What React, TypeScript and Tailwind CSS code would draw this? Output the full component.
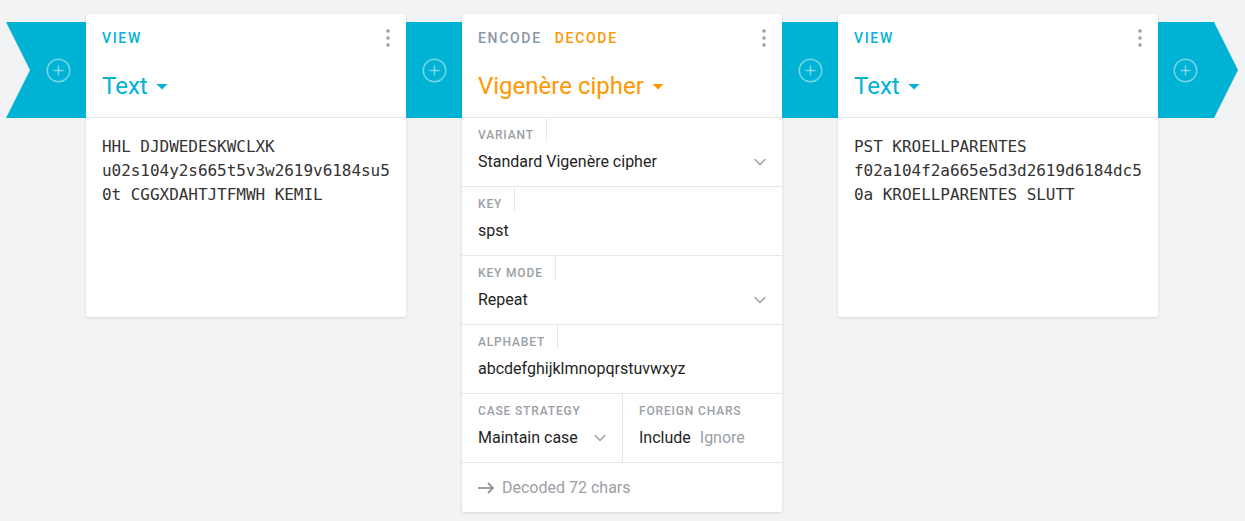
import React from "react";
import { CirclePlus, EllipsisVertical, ChevronDown } from "lucide-react";

function PlusIcon() {
  return <CirclePlus size={27} strokeWidth={1.3} className="text-white/45" />;
}

function Caret() {
  return (
    <svg width="24" height="24" viewBox="0 0 24 24" className="ml-[2px]">
      <path d="M6.5 10l5.5 5.5 5.5-5.5z" fill="currentColor" />
    </svg>
  );
}

function Dots() {
  return <EllipsisVertical size={24} strokeWidth={1.6} className="text-[#9e9e9e]" />;
}

function ViewCard({ lines }: { lines: string }) {
  return (
    <div className="w-[320px] shrink-0 rounded-[2px] bg-white shadow-[0_1px_3px_rgba(0,0,0,0.12)]">
      <div className="h-[104px] border-b border-[#e6e8eb] pt-[14px]">
        <div className="flex h-[20px] items-center justify-between pl-4 pr-[6px]">
          <span className="text-[14px] font-medium leading-[20px] tracking-[0.12em] text-[#00b2d3]">VIEW</span>
          <Dots />
        </div>
        <div className="mt-[22px] flex h-[32px] items-center pl-4 text-[#00b2d3]">
          <span className="text-[24px] leading-[32px]">Text</span>
          <Caret />
        </div>
      </div>
      <div className="h-[199px] px-4 pt-[17px]">
        <p className="break-words font-['DejaVu_Sans_Mono',monospace] text-[16px] leading-[24px] tracking-[-0.04px] text-[#333333]">
          {lines}
        </p>
      </div>
    </div>
  );
}

function Field({ label, value, chevron }: { label: string; value: string; chevron?: boolean }) {
  return (
    <div className="h-[69px] border-b border-[#e6e8eb]">
      <div className="flex">
        <div className="h-[24px] border-r border-[#e6e8eb] pl-4 pr-[12px] pt-[11px] text-[12px] font-medium leading-[13px] tracking-[0.07em] text-[#9aa0a6]">
          {label}
        </div>
      </div>
      <div className="mt-[8px] flex h-[24px] items-center justify-between pl-4 pr-[12px] text-[16px] leading-[24px] text-[#1f1f1f]">
        <span>{value}</span>
        {chevron && <ChevronDown size={20} strokeWidth={1.6} className="text-[#9e9e9e]" />}
      </div>
    </div>
  );
}

function CipherCard() {
  return (
    <div className="w-[320px] shrink-0 rounded-[2px] bg-white shadow-[0_1px_3px_rgba(0,0,0,0.12)]">
      <div className="h-[104px] border-b border-[#e6e8eb] pt-[14px]">
        <div className="flex h-[20px] items-center justify-between pl-4 pr-[6px]">
          <div className="flex gap-[13px] text-[14px] font-medium leading-[20px] tracking-[0.12em]">
            <span className="text-[#8a97a3]">ENCODE</span>
            <span className="text-[#ff9800]">DECODE</span>
          </div>
          <Dots />
        </div>
        <div className="mt-[22px] flex h-[32px] items-center pl-4 text-[#ff9800]">
          <span className="text-[24px] leading-[32px]">Vigenère cipher</span>
          <Caret />
        </div>
      </div>
      <Field label="VARIANT" value="Standard Vigenère cipher" chevron />
      <Field label="KEY" value="spst" />
      <Field label="KEY MODE" value="Repeat" chevron />
      <Field label="ALPHABET" value="abcdefghijklmnopqrstuvwxyz" />
      <div className="grid h-[69px] grid-cols-[161px_1fr] border-b border-[#e6e8eb]">
        <div className="border-r border-[#e6e8eb]">
          <div className="h-[24px] pl-4 pt-[11px] text-[12px] font-medium leading-[13px] tracking-[0.07em] text-[#9aa0a6]">
            CASE STRATEGY
          </div>
          <div className="mt-[8px] flex h-[24px] items-center justify-between pl-4 pr-[12px] text-[16px] leading-[24px] text-[#1f1f1f]">
            <span>Maintain case</span>
            <ChevronDown size={20} strokeWidth={1.6} className="text-[#9e9e9e]" />
          </div>
        </div>
        <div>
          <div className="h-[24px] pl-4 pt-[11px] text-[12px] font-medium leading-[13px] tracking-[0.07em] text-[#9aa0a6]">
            FOREIGN CHARS
          </div>
          <div className="mt-[8px] flex h-[24px] items-center gap-[9px] pl-4 text-[16px] leading-[24px]">
            <span className="text-[#1f1f1f]">Include</span>
            <span className="text-[#9aa0a6]">Ignore</span>
          </div>
        </div>
      </div>
      <div className="flex items-center gap-[8px] pb-[12px] pl-4 pt-[13px] text-[16px] leading-[24px] text-[#9aa0a6]">
        <svg width="16" height="12" viewBox="0 0 16 12" fill="none" stroke="#8f969c" strokeWidth="1.8">
          <path d="M0 6h15" />
          <path d="M10 1l5 5-5 5" />
        </svg>
        <span>Decoded 72 chars</span>
      </div>
    </div>
  );
}

function Gap() {
  return (
    <div className="mt-[8px] flex h-[96px] w-[56px] shrink-0 items-center justify-center bg-[#00b2d3]">
      <PlusIcon />
    </div>
  );
}

export default function App() {
  return (
    <div className="min-h-screen w-full bg-[#f2f3f5] font-['Roboto',sans-serif]">
      <div className="flex items-start pl-[6px] pt-[14px]">
        <div className="mt-[8px] flex h-[96px] w-[80px] shrink-0 items-center justify-end bg-[#00b2d3] pr-[14px] [clip-path:polygon(0_0,100%_0,100%_100%,0_100%,24px_50%)]">
          <PlusIcon />
        </div>
        <ViewCard lines="HHL DJDWEDESKWCLXK u02s104y2s665t5v3w2619v6184su50t CGGXDAHTJTFMWH KEMIL" />
        <Gap />
        <CipherCard />
        <Gap />
        <ViewCard lines="PST KROELLPARENTES f02a104f2a665e5d3d2619d6184dc50a KROELLPARENTES SLUTT" />
        <div className="mt-[8px] flex h-[96px] w-[80px] shrink-0 items-center bg-[#00b2d3] pl-[14px] [clip-path:polygon(0_0,56px_0,100%_50%,56px_100%,0_100%)]">
          <PlusIcon />
        </div>
      </div>
    </div>
  );
}
